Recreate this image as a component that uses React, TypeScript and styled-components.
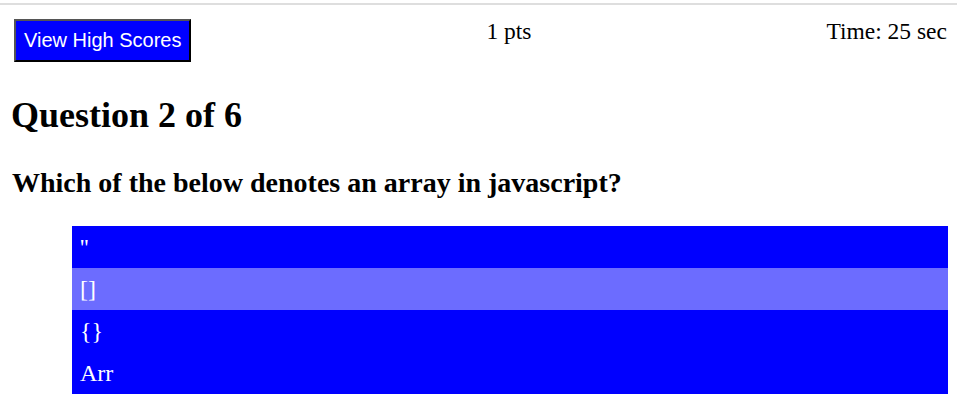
import React from "react"
import styled, { createGlobalStyle } from "styled-components"

const GlobalStyle = createGlobalStyle`
  body {
    margin: 0;
    background: #fff;
    font-family: "Liberation Serif", "Times New Roman", serif;
    color: #000;
  }
`

const choices = ["''", "[]", "{}", "Arr"]

export default function App() {
  return (
    <>
      <GlobalStyle />
      <Page>
        <Rule />
        <Header>
          <ScoresButton>View High Scores</ScoresButton>
          <Stat>1 pts</Stat>
          <Stat>Time: 25 sec</Stat>
        </Header>
        <Title>Question 2 of 6</Title>
        <Prompt>Which of the below denotes an array in javascript?</Prompt>
        <Choices>
          {choices.map((c, i) => (
            <Choice key={c} $active={i === 1}>
              {c}
            </Choice>
          ))}
        </Choices>
      </Page>
    </>
  )
}

const Page = styled.div`
  padding-top: 3px;
`
const Rule = styled.div`
  border-top: 2px solid #dedede;
`
const Header = styled.div`
  display: flex;
  justify-content: space-between;
  align-items: flex-start;
  padding: 14px 10px 0 14px;
`
const ScoresButton = styled.button`
  font-family: "Liberation Sans", Arial, sans-serif;
  font-size: 20px;
  line-height: 23px;
  color: #fff;
  background: #0000ff;
  padding: 8px 8px;
  border: 2px solid;
  border-color: #555 #000 #000 #555;
  margin: 0;
  cursor: pointer;
`
const Stat = styled.span`
  font-size: 23.5px;
  line-height: 26px;
  margin-top: -1px;
`
const Title = styled.h1`
  font-size: 36px;
  font-weight: bold;
  line-height: 41px;
  margin: 33px 0 0;
  padding-left: 11px;
`
const Prompt = styled.h3`
  font-size: 28px;
  font-weight: bold;
  line-height: 32px;
  margin: 31px 0 0;
  padding-left: 12px;
`
const Choices = styled.ul`
  list-style: none;
  margin: 27px 9px 0 72px;
  padding: 0;
`
const Choice = styled.li<{ $active?: boolean }>`
  background: ${(p) => (p.$active ? "#6c6cff" : "#0000ff")};
  color: #fff;
  font-size: 24px;
  line-height: 28px;
  padding: 7px 8px;
`
